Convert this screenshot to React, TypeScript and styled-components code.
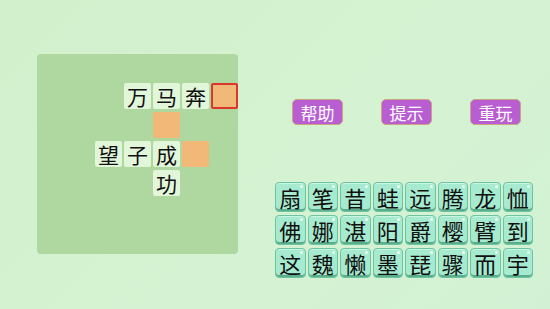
import styled, { createGlobalStyle } from "styled-components";

const colors = {
    page: "#d3f1d0",
    panel: "#aed8a0",
    cell: "#e2f6da",
    blank: "#f2b877",
    selected: "#d8372a",
    button: "#b95ed2",
    buttonBorder: "#c9a47d",
    tile: "#a6ebcf",
    tileBorder: "#6cc4a0",
    tileShadow: "#5aae8c",
    ink: "#111111",
};

const GlobalStyle = createGlobalStyle`
    html, body {
        margin: 0;
        padding: 0;
        background: ${colors.page};
    }
    body {
        font-family: "Noto Sans CJK SC", "Noto Sans", sans-serif;
    }
`;

const Screen = styled.div`
    width: 550px;
    height: 309px;
    box-sizing: border-box;
    padding: 54px 0 0 37px;
    display: flex;
    align-items: flex-start;
    background: linear-gradient(135deg, #d2f0cc 0%, #d5f2d2 60%, #d2f1d4 100%);
    overflow: hidden;
`;

const Board = styled.div`
    width: 201px;
    height: 200px;
    box-sizing: border-box;
    padding: 29px 0 0 58px;
    background: ${colors.panel};
    border-radius: 4px;
`;

const CrossGrid = styled.div`
    display: grid;
    grid-template-columns: repeat(5, 27px);
    grid-template-rows: repeat(4, 26px);
    column-gap: 2px;
    row-gap: 3px;
`;

const Cell = styled.div<{ $col: number; $row: number; $kind: "text" | "blank" | "selected" }>`
    grid-column: ${(p) => p.$col};
    grid-row: ${(p) => p.$row};
    box-sizing: border-box;
    display: flex;
    align-items: center;
    justify-content: center;
    border-radius: 2px;
    font-size: 21px;
    line-height: 22px;
    color: ${colors.ink};
    background: ${(p) => (p.$kind === "text" ? colors.cell : colors.blank)};
    border: ${(p) => (p.$kind === "selected" ? `2px solid ${colors.selected}` : "none")};
`;

const Side = styled.div`
    margin-left: 37px;
    padding-top: 45px;
    display: flex;
    flex-direction: column;
`;

const Toolbar = styled.div`
    display: flex;
    gap: 38px;
    padding-left: 17px;
`;

const ToolButton = styled.button`
    width: 51px;
    height: 26px;
    box-sizing: border-box;
    padding: 0;
    border: 1.5px solid ${colors.buttonBorder};
    border-radius: 5px;
    background: ${colors.button};
    color: #ffffff;
    font-family: "Noto Sans CJK SC", sans-serif;
    font-size: 17px;
    line-height: 1;
    display: flex;
    align-items: center;
    justify-content: center;
`;

const TileGrid = styled.div`
    margin-top: 57px;
    width: 258px;
    display: grid;
    grid-template-columns: repeat(8, 1fr);
    column-gap: 2px;
    row-gap: 3px;
`;

const Tile = styled.div`
    position: relative;
    height: 30px;
    box-sizing: border-box;
    display: flex;
    align-items: center;
    justify-content: center;
    border: 1px solid ${colors.tileBorder};
    border-radius: 4px;
    background: ${colors.tile};
    box-shadow: inset 0 -2px 0 ${colors.tileShadow}, inset 0 1px 0 #c9f6e2;
    font-size: 22px;
    line-height: 1;
    color: ${colors.ink};

    &::after {
        content: "";
        position: absolute;
        top: 2px;
        right: 2px;
        width: 3px;
        height: 3px;
        border-radius: 50%;
        background: #ffffff;
        opacity: 0.8;
    }
`;

type CellData = { col: number; row: number; ch?: string; kind: "text" | "blank" | "selected" };

const cells: CellData[] = [
    { col: 2, row: 1, ch: "万", kind: "text" },
    { col: 3, row: 1, ch: "马", kind: "text" },
    { col: 4, row: 1, ch: "奔", kind: "text" },
    { col: 5, row: 1, kind: "selected" },
    { col: 3, row: 2, kind: "blank" },
    { col: 1, row: 3, ch: "望", kind: "text" },
    { col: 2, row: 3, ch: "子", kind: "text" },
    { col: 3, row: 3, ch: "成", kind: "text" },
    { col: 4, row: 3, kind: "blank" },
    { col: 3, row: 4, ch: "功", kind: "text" },
];

const words = "扇笔昔蛙远腾龙恤佛娜湛阳爵樱臂到这魏懒墨琵骤而宇".split("");

export default function App() {
    return (
        <>
            <GlobalStyle />
            <Screen>
                <Board>
                    <CrossGrid>
                        {cells.map((c) => (
                            <Cell key={`${c.col}-${c.row}`} $col={c.col} $row={c.row} $kind={c.kind}>
                                {c.ch}
                            </Cell>
                        ))}
                    </CrossGrid>
                </Board>
                <Side>
                    <Toolbar>
                        <ToolButton>帮助</ToolButton>
                        <ToolButton>提示</ToolButton>
                        <ToolButton>重玩</ToolButton>
                    </Toolbar>
                    <TileGrid>
                        {words.map((w, i) => (
                            <Tile key={i}>{w}</Tile>
                        ))}
                    </TileGrid>
                </Side>
            </Screen>
        </>
    );
}
